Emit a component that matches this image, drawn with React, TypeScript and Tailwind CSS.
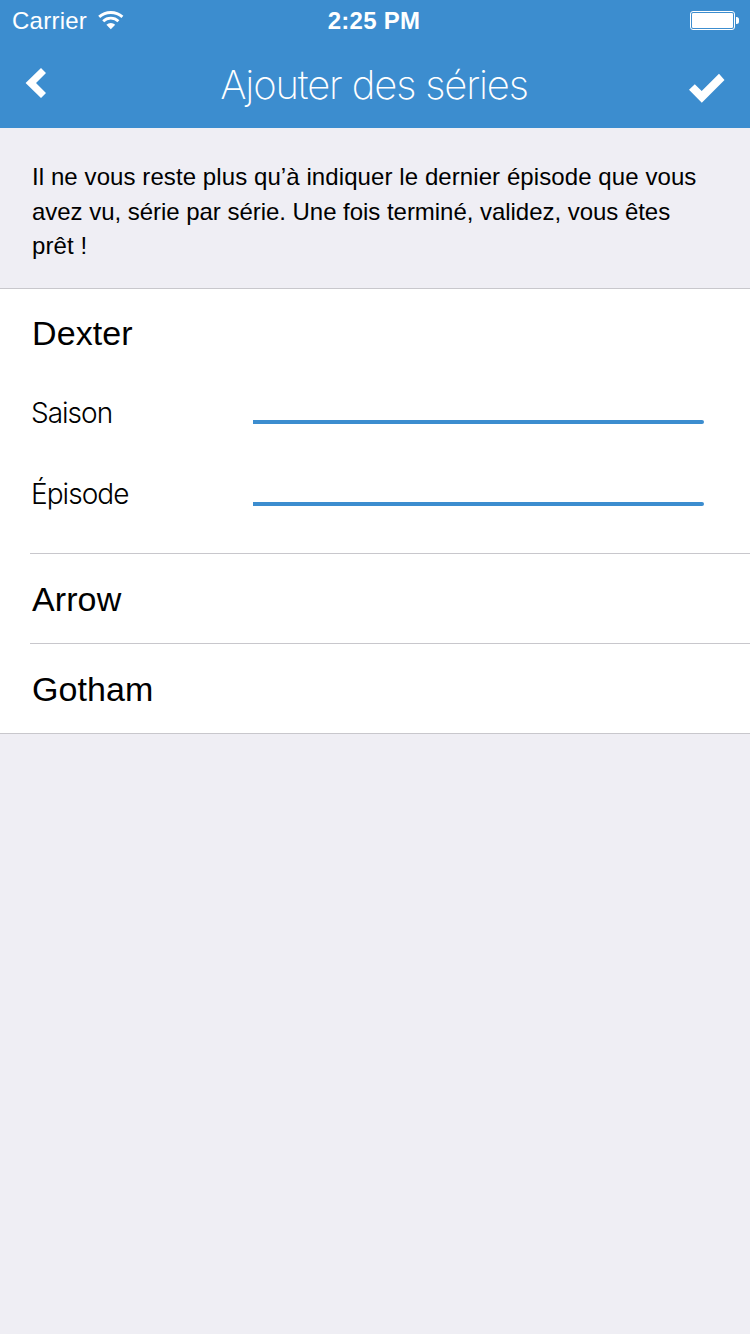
import React from "react";

const sans = "font-['Liberation_Sans',Arial,sans-serif]";
const light = "font-[Inter,'Liberation_Sans',sans-serif]";

function WifiIcon() {
  return (
    <svg className="block h-[20px] w-[26px]" viewBox="0 0 26 20" fill="none" stroke="#fff">
      <path d="M1.2 6.9A17.4 17.4 0 0 1 24.4 6.9" strokeWidth="2.9" />
      <path d="M5.2 11.2A11 11 0 0 1 20.4 11.2" strokeWidth="2.8" />
      <path d="M12.8 19.2 8.4 14.8A6.4 6.4 0 0 1 17.2 14.8Z" fill="#fff" stroke="none" />
    </svg>
  );
}

function BatteryIcon() {
  return (
    <svg className="block h-[19px] w-[50px]" viewBox="0 0 50 19">
      <rect x="0.5" y="0.5" width="44" height="18" rx="2.5" fill="none" stroke="#fff" />
      <rect x="2" y="2" width="41" height="15" rx="1.2" fill="#fff" />
      <path d="M46 6h.5a2.5 2.5 0 0 1 2.5 2.5v2a2.5 2.5 0 0 1-2.5 2.5H46z" fill="#fff" />
    </svg>
  );
}

function StatusBar() {
  return (
    <div className="grid h-10 grid-cols-3 items-center pl-3 pr-[14px] text-[24px]">
      <div className="flex items-center gap-[11px]">
        <span className="pt-[2px] leading-[38px] tracking-[0.25px]">Carrier</span>
        <WifiIcon />
      </div>
      <span className="pt-[2px] text-center font-bold leading-[38px] tracking-[0.25px]">2:25 PM</span>
      <div className="-mr-1 flex justify-end">
        <BatteryIcon />
      </div>
    </div>
  );
}

function NavBar() {
  return (
    <div className="flex h-[88px] items-center justify-between pl-[25px] pr-[25px]">
      <button className="flex w-[36px]" aria-label="Retour">
        <svg className="mb-[2px] block h-[32px] w-[22px]" viewBox="0 0 22 32">
          <path d="M16 1 21 6 11 16 21 26 16 31 .6 16Z" fill="#fff" />
        </svg>
      </button>
      <h1 className="pt-px pr-[2px] font-[Inter,'Liberation_Sans',sans-serif] text-[40px] font-[250] leading-[87px] tracking-[-1.15px] whitespace-nowrap">
        Ajouter des séries
      </h1>
      <button className="flex w-[36px]" aria-label="Valider">
        <svg className="mt-[7px] block h-[30px] w-[36px]" viewBox="0 0 36 30">
          <path d="M0 16.8 5.8 11.2 12.7 18 30 .8 35.5 7 12.8 29.8Z" fill="#fff" />
        </svg>
      </button>
    </div>
  );
}

function Field({ label, raised }: { label: string; raised?: boolean }) {
  return (
    <label className={"flex h-[82px] items-start pl-[31px] pr-[46px] " + light}>
      <span
        className={
          "w-[222px] text-[28px] font-light " +
          (raised ? "leading-[81px] tracking-[-0.95px]" : "leading-[82px] tracking-[-1px]")
        }
      >
        {label}
      </span>
      <span className="flex h-[52px] min-w-0 flex-1 flex-col">
        <input className="min-h-0 w-full flex-1 bg-transparent text-[28px] outline-none" />
        <span className="h-1 rounded-r-[2px] bg-[#3c8dcf]" />
      </span>
    </label>
  );
}

function ShowName({ children }: { children: React.ReactNode }) {
  return <h2 className="pl-8 text-[34px] leading-[90px] tracking-[0.1px]">{children}</h2>;
}

export default function App() {
  return (
    <div className={"flex min-h-[1334px] w-[750px] flex-col bg-[#efeef4] text-black " + sans}>
      <header className="bg-[#3c8dcf] text-white">
        <StatusBar />
        <NavBar />
      </header>
      <p className="h-[160px] px-8 pt-8 text-[24px] leading-[34.5px]">
        <span className="tracking-[0.085px]">Il ne vous reste plus qu’à indiquer le dernier épisode que vous </span>
        <span className="tracking-[-0.035px]">avez vu, série par série. Une fois terminé, validez, vous êtes </span>
        <span className="tracking-[0.1px]">prêt !</span>
      </p>
      <main className="border-y border-[#c8c7cc] bg-white">
        <section className="h-[264px]">
          <div className="flex h-[83px] flex-col">
            <div className="-mt-px">
              <ShowName>Dexter</ShowName>
            </div>
          </div>
          <Field label="Saison" />
          <Field label="Épisode" raised />
        </section>
        <section className="ml-[30px] h-[90px] border-t border-[#c8c7cc]">
          <div className="-ml-[30px]">
            <ShowName>Arrow</ShowName>
          </div>
        </section>
        <section className="ml-[30px] h-[90px] border-t border-[#c8c7cc]">
          <div className="-ml-[30px]">
            <ShowName>Gotham</ShowName>
          </div>
        </section>
      </main>
    </div>
  );
}
